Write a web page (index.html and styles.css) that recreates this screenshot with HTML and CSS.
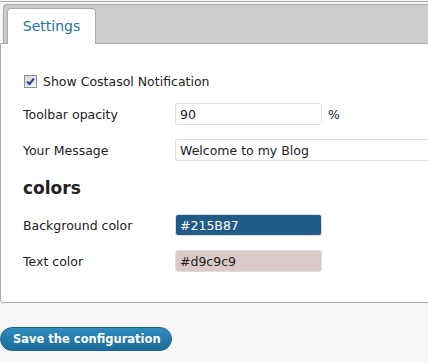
FILE: index.html
```html
<!DOCTYPE html>
<html lang="en">
<head>
  <meta charset="UTF-8">
  <title>Costasol Settings</title>
  <link rel="stylesheet" href="styles.css">
</head>
<body>
  <div class="wrap">
    <div class="tabs">
      <a class="tab" href="#">Settings</a>
    </div>
    <div class="panel">
      <label class="check-row">
        <span class="checkbox">
          <svg width="11" height="11" viewBox="0 0 11 11"><path d="M2 5.5 L4.5 8 L9 2.5" fill="none" stroke="#2b3f8f" stroke-width="2"/></svg>
        </span>
        Show Costasol Notification
      </label>
      <div class="row">
        <span class="label">Toolbar opacity</span>
        <input type="text" class="field" value="90" />
        <span class="unit">%</span>
      </div>
      <div class="row">
        <span class="label">Your Message</span>
        <input type="text" class="field wide" value="Welcome to my Blog" />
      </div>
      <h3>colors</h3>
      <div class="row">
        <span class="label">Background color</span>
        <input type="text" class="field color-bg" value="#215B87" />
      </div>
      <div class="row">
        <span class="label">Text color</span>
        <input type="text" class="field color-text" value="#d9c9c9" />
      </div>
    </div>
    <button class="save">Save the configuration</button>
  </div>
</body>
</html>
```

FILE: styles.css
```css
html, body {
  overflow: hidden;
}

body {
  margin: 0;
  padding-top: 1px;
  background: #f7f7f7;
  font-family: 'DejaVu Sans', Verdana, sans-serif;
  font-size: 12.5px;
  color: #222;
}

.wrap {
  width: 460px;
  border-top: 1px solid #aaa;
}

.tabs {
  display: flex;
  margin: 2px 0 0 3px;
  padding: 3px 0 0 3px;
  background: #ccc;
  border: 1px solid #aaa;
  border-bottom: none;
  border-radius: 4px 0 0 0;
}

.tab {
  position: relative;
  width: 87px;
  height: 35px;
  margin-bottom: -1px;
  line-height: 35px;
  text-align: center;
  background: #fff;
  border: 1px solid #aaa;
  border-bottom: none;
  border-radius: 4px 4px 0 0;
  color: #21759b;
  font-size: 14px;
  text-decoration: none;
}

.panel {
  background: #fff;
  border: 1px solid #aaa;
  border-radius: 0 0 3px 3px;
  padding: 26px 0 16px 22px;
}

.check-row {
  display: flex;
  align-items: center;
  height: 22px;
  margin-bottom: 11px;
}

.checkbox {
  display: flex;
  align-items: center;
  justify-content: center;
  box-sizing: border-box;
  width: 13px;
  height: 13px;
  margin: 0 6px 0 1px;
  border: 1px solid #8e8f8f;
  background: linear-gradient(to bottom right, #d6d6d6, #f6f6f6);
}

.row {
  display: flex;
  align-items: center;
  height: 22px;
  margin-bottom: 14px;
}

.label {
  flex-shrink: 0;
  width: 152px;
}

.field {
  flex-shrink: 0;
  box-sizing: border-box;
  width: 147px;
  height: 22px;
  padding: 0 4px;
  border: 1px solid #ddd;
  border-radius: 3px;
  font-family: 'DejaVu Sans', Verdana, sans-serif;
  font-size: 12.5px;
  color: #222;
  background: #fff;
}

.field.wide {
  width: 320px;
}

.unit {
  margin-left: 6px;
}

.color-bg {
  background: #215b87;
  color: #fff;
}

.color-text {
  background: #d9c9c9;
  color: #222;
}

h3 {
  margin: 16px 0 15px;
  font-size: 17px;
  line-height: 22px;
  color: #222;
}

.save {
  display: block;
  margin-top: 24px;
  height: 24px;
  width: 172px;
  padding: 0 0 0 12px;
  text-align: left;
  border: 1px solid #1d6590;
  border-radius: 12px;
  background: linear-gradient(to bottom, #2e8cbd, #1e6c97);
  color: #fff;
  font-family: 'DejaVu Sans', Verdana, sans-serif;
  font-weight: bold;
  font-size: 11.5px;
  cursor: pointer;
}
```
